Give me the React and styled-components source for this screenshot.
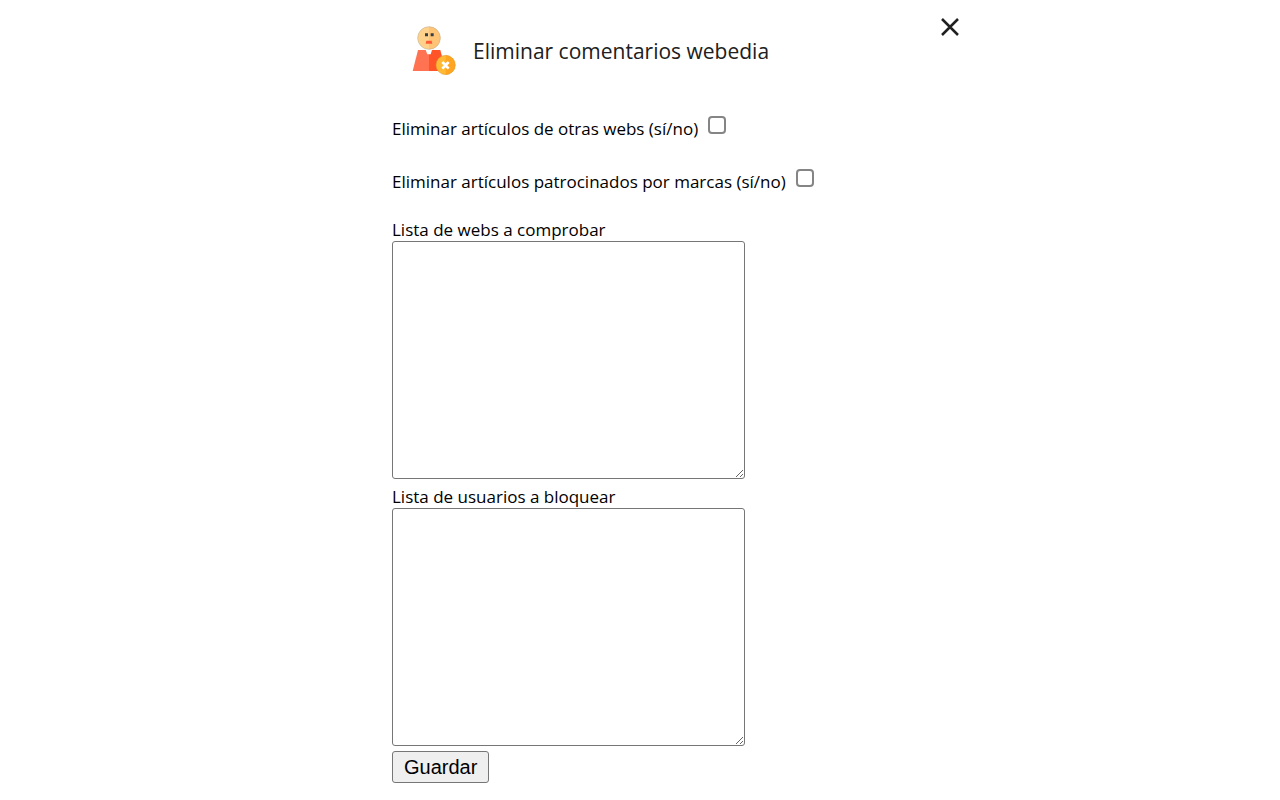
import React from "react";
import styled, { createGlobalStyle } from "styled-components";

const GlobalStyle = createGlobalStyle`
  body {
    margin: 0;
    background: #fff;
    color: #000;
    font-family: "Segoe UI", "Open Sans", "Noto Sans", sans-serif;
    font-size: 17px;
    line-height: 24px;
  }
`;

const Panel = styled.main`
  box-sizing: border-box;
  width: 100%;
  max-width: 672px;
  margin: 0 auto;
  padding-left: 88px;
`;

const Header = styled.header`
  display: flex;
  align-items: flex-start;
  gap: 13px;
  padding: 10px 9px 0 18px;
`;

const Logo = styled.svg`
  flex: none;
  width: 50px;
  height: 50px;
  margin-top: 15px;
`;

const Title = styled.h1`
  flex: 1;
  margin: 25px 0 0;
  color: #202020;
  font-size: 21px;
  font-weight: 400;
  line-height: 32px;
`;

const CloseButton = styled.button`
  display: flex;
  align-items: center;
  justify-content: center;
  width: 34px;
  height: 34px;
  padding: 0;
  border: 0;
  background: transparent;
  color: #202020;
`;

const Form = styled.form`
  display: flex;
  flex-direction: column;
  align-items: flex-start;
  padding-top: 40px;
`;

const CheckRow = styled.div`
  display: flex;
  align-items: flex-start;
  gap: 10px;
  height: 53px;
`;

const CheckLabel = styled.label`
  padding-top: 2px;
`;

const Checkbox = styled.input`
  appearance: none;
  box-sizing: border-box;
  width: 18px;
  height: 18px;
  margin: 1px 0 0;
  border: 2px solid #858585;
  border-radius: 4px;
  background: #fff;

  &:checked {
    border-color: #0075ff;
    background: #0075ff;
    box-shadow: inset 0 0 0 2px #fff;
  }
`;

const FieldLabel = styled.label`
  padding-bottom: 2px;
  line-height: 18px;
`;

const TextArea = styled.textarea`
  box-sizing: border-box;
  width: 353px;
  max-width: 100%;
  height: 238px;
  margin: 0 0 9px;
  padding: 2px;
  border: 1px solid #767676;
  border-radius: 3px;
  background: #fff;
  font: 20px "Liberation Mono", monospace;
`;

const SaveButton = styled.button`
  box-sizing: border-box;
  height: 32px;
  margin: -4px 0 16px;
  padding: 0 11px;
  border: 1px solid #767676;
  border-radius: 3px;
  background: #efefef;
  color: #000;
  font: 20px "Liberation Sans", Arial, sans-serif;
`;

const UserRemovedLogo = () => (
  <Logo viewBox="30 30 150 150" aria-hidden="true">
    <path d="M54 105H87V168H38Z" fill="#ff7252" />
    <path d="M87 105H121L137 168H87Z" fill="#ff5328" />
    <path d="M77 105H96L92 118H82Z" fill="#fff" />
    <circle cx="87" cy="69" r="34" fill="#ffd28c" />
    <path d="M87 35A34 34 0 0 1 87 103Z" fill="#ffc476" />
    <circle cx="87" cy="69" r="34" fill="none" stroke="#b9a98d" strokeWidth="1.5" />
    <path d="M75 55h9v9h-9zM92 55h9v9h-9z" fill="#333e48" />
    <path d="M79 77H95L97 86H77Z" fill="#ff5a35" />
    <circle cx="137" cy="150" r="29" fill="#ffb935" />
    <path d="M137 121A29 29 0 0 1 137 179Z" fill="#ffa520" />
    <circle cx="137" cy="150" r="29" fill="none" stroke="#d59b38" strokeWidth="1.5" />
    <path d="M127 141L146 161M146 141L127 161" stroke="#fff" strokeWidth="8" />
  </Logo>
);

const CloseIcon = () => (
  <svg width="20" height="20" viewBox="0 0 20 20" aria-hidden="true">
    <path d="M2 2L18 18M18 2L2 18" stroke="currentColor" strokeWidth="2.5" />
  </svg>
);

const CheckOption = ({ id, children }) => (
  <CheckRow>
    <CheckLabel htmlFor={id}>{children}</CheckLabel>
    <Checkbox id={id} type="checkbox" />
  </CheckRow>
);

export default function App() {
  return (
    <>
      <GlobalStyle />
      <Panel>
        <Header>
          <UserRemovedLogo />
          <Title>Eliminar comentarios webedia</Title>
          <CloseButton type="button" aria-label="Cerrar">
            <CloseIcon />
          </CloseButton>
        </Header>
        <Form onSubmit={(event) => event.preventDefault()}>
          <CheckOption id="otras-webs">Eliminar artículos de otras webs (sí/no)</CheckOption>
          <CheckOption id="patrocinados">Eliminar artículos patrocinados por marcas (sí/no)</CheckOption>
          <FieldLabel htmlFor="lista-webs">Lista de webs a comprobar</FieldLabel>
          <TextArea id="lista-webs" />
          <FieldLabel htmlFor="lista-usuarios">Lista de usuarios a bloquear</FieldLabel>
          <TextArea id="lista-usuarios" />
          <SaveButton type="submit">Guardar</SaveButton>
        </Form>
      </Panel>
    </>
  );
}
